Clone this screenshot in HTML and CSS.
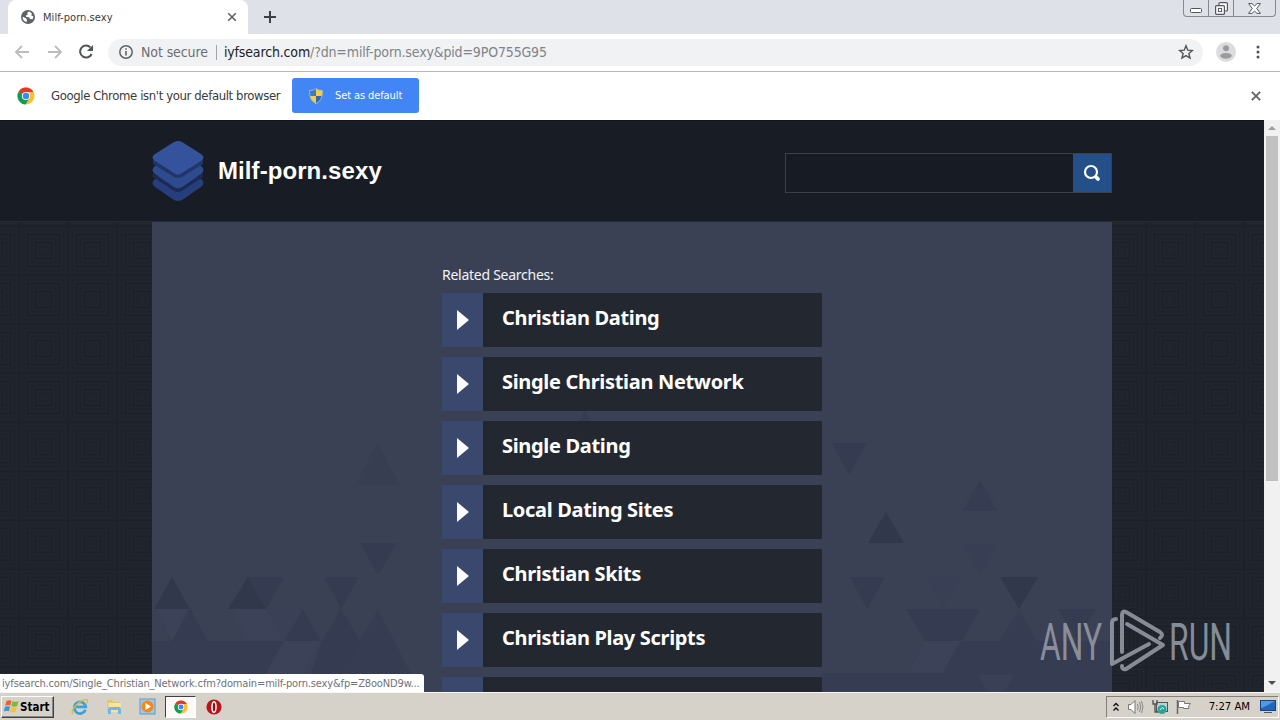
FILE: index.html
```
<!DOCTYPE html>
<html lang="en">
<head>
  <meta charset="UTF-8" />
  <title>Milf-porn.sexy</title>
  <meta name="viewport" content="width=device-width, initial-scale=1" />
  <link rel="stylesheet" href="styles.css">
</head>
<body>
  <!-- shared icons -->
  <svg width="0" height="0" class="defs">
    <symbol id="chrome" viewBox="0 0 18 18">
      <circle cx="9" cy="9" r="8.5" fill="#fbc02d"/>
      <path d="M9 9 1.6 4.7A8.5 8.5 0 0 1 16.4 5H9Z" fill="#db3a2c"/>
      <path d="M1.6 4.7A8.5 8.5 0 0 0 8.6 17.5L12.4 11 9 9Z" fill="#109d58"/>
      <circle cx="9" cy="9" r="4.1" fill="#fff"/>
      <circle cx="9" cy="9" r="3.2" fill="#4285f4"/>
    </symbol>
  </svg>

  <div class="tab-strip">
    <div class="tab">
      <svg class="globe" width="14" height="14" viewBox="0 0 14 14">
        <circle cx="7" cy="7" r="7" fill="#5f6368"/>
        <path d="M8 1.6 6.2 2.8 6.8 4.4 5 5.4 5.2 7 8 7.2 9 9 11.6 9.2 12.4 6.6 10.4 5.6 10.8 3.2ZM1.6 6.8 4.6 8 6 9.8 5.4 12.2A5.6 5.6 0 0 1 1.6 6.8Z" fill="#fff"/>
      </svg>
      <span class="tab-title">Milf-porn.sexy</span>
      <svg class="tab-close" width="10" height="10" viewBox="0 0 10 10"><path d="M1.2 1.2 8.8 8.8M8.8 1.2 1.2 8.8" stroke="#5f6368" stroke-width="1.6"/></svg>
    </div>
    <svg class="new-tab" width="12" height="12" viewBox="0 0 12 12"><path d="M6 0V12M0 6H12" stroke="#3c4043" stroke-width="2"/></svg>
    <div class="window-buttons">
      <span class="min"><svg width="12" height="5" viewBox="0 0 12 5"><rect x=".5" y=".5" width="11" height="4" rx="1" fill="#fff" stroke="#53565e"/></svg></span>
      <span class="restore"><svg width="13" height="13" viewBox="0 0 13 13"><rect x="4" y=".6" width="8.4" height="8.4" rx="1" fill="#fff" stroke="#53565e" stroke-width="1.2"/><rect x=".6" y="3.6" width="8.8" height="8.8" rx="1" fill="#fff" stroke="#53565e" stroke-width="1.2"/><rect x="3.4" y="6.4" width="3.2" height="3.2" fill="#fff" stroke="#53565e"/></svg></span>
      <span class="close"><svg width="13" height="11" viewBox="0 0 13 11"><path d="M.6.6H4L6.5 3 9 .6H12.4L8.7 5.5 12.4 10.4H9L6.5 8 4 10.4H.6L4.3 5.5Z" fill="#fff" stroke="#53565e"/></svg></span>
    </div>
  </div>

  <div class="toolbar">
    <svg width="100" height="20" viewBox="0 0 100 20" class="nav">
      <path d="M21 10H8M14 4 8 10 14 16" fill="none" stroke="#babcbe" stroke-width="1.8"/>
      <path d="M40 10H53M47 4 53 10 47 16" fill="none" stroke="#babcbe" stroke-width="1.8"/>
      <path d="M82.400 5.400A6 6 0 1 0 83.600 12" fill="none" stroke="#505357" stroke-width="2"/>
      <path d="M85 3V9H79Z" fill="#505357"/>
    </svg>
    <div class="omnibox">
      <svg width="14" height="14" viewBox="0 0 14 14"><circle cx="7" cy="7" r="6.2" fill="none" stroke="#5f6368" stroke-width="1.5"/><path d="M7 6V10.5M7 3.3V4.8" stroke="#5f6368" stroke-width="1.6"/></svg>
      <span class="secure">Not secure</span>
      <span class="divider"></span>
      <span class="url"><b>iyfsearch.com</b>/?dn=milf-porn.sexy&amp;pid=9PO755G95</span>
      <svg class="star" width="16" height="16" viewBox="0 0 16 16"><path d="M8 1.8 9.8 6.2 14.4 6.5 10.9 9.5 12 14 8 11.6 4 14 5.1 9.5 1.6 6.5 6.2 6.2Z" fill="none" stroke="#505357" stroke-width="1.4"/></svg>
    </div>
    <svg class="avatar" width="20" height="20" viewBox="0 0 20 20"><circle cx="10" cy="10" r="10" fill="#dcdcde"/><circle cx="10" cy="6.3" r="3" fill="#9b9b9d"/><ellipse cx="10" cy="13.8" rx="5.8" ry="2.9" fill="#9b9b9d"/></svg>
    <svg class="dots" width="4" height="14" viewBox="0 0 4 14"><g fill="#505357"><circle cx="2" cy="2" r="1.5"/><circle cx="2" cy="7" r="1.5"/><circle cx="2" cy="12" r="1.5"/></g></svg>
  </div>

  <div class="infobar">
    <svg width="18" height="18"><use href="#chrome"/></svg>
    <span class="info-text">Google Chrome isn't your default browser</span>
    <button class="default-btn">
      <svg width="14" height="16" viewBox="0 0 14 16">
        <path d="M7 .5C5 2 3 2.4.6 2.4.4 8.5 2 13 7 15.6Z" fill="#3c78d0"/>
        <path d="M7 .5C9 2 11 2.4 13.4 2.4 13.6 8.5 12 13 7 15.6Z" fill="#f6cf3d"/>
        <path d="M7 8H.9C1.5 11.5 3.4 14 7 15.6Z" fill="#f6cf3d"/>
        <path d="M7 8H13.1C12.5 11.5 10.6 14 7 15.6Z" fill="#2d68bd"/>
        <path d="M7 .5C5 2 3 2.4.6 2.4.4 8.5 2 13 7 15.6 12 13 13.6 8.5 13.4 2.4 11 2.4 9 2 7 .5Z" fill="none" stroke="#a9b8b8"/>
      </svg>
      <span>Set as default</span>
    </button>
    <svg class="info-close" width="10" height="10" viewBox="0 0 10 10"><path d="M.8.8 9.2 9.2M9.2.8.8 9.2" stroke="#5f6368" stroke-width="1.8"/></svg>
  </div>

  <div class="viewport">
    <div class="page">
      <header class="site-header">
        <div class="wrap header-row">
          <svg class="logo" width="52" height="62" viewBox="0 0 52 62">
            <path d="M3 39 22 28H30L49 39Q54 43 49 47L30 60Q26 62 22 60L3 47Q-2 43 3 39Z" fill="#263f7c"/>
            <path d="M1 33 26 49 51 33V37L30 51Q26 53 22 51L1 37Z" fill="#1c2b55"/>
            <path d="M3 26 22 15H30L49 26Q54 30 49 34L30 47Q26 49 22 47L3 34Q-2 30 3 26Z" fill="#2e4b90"/>
            <path d="M1 19 26 35 51 19V24L30 37Q26 39 22 37L1 24Z" fill="#223568"/>
            <path d="M3 14 22 2Q26 0 30 2L49 14Q54 17.500 49 21L30 33Q26 36 22 33L3 21Q-2 17.500 3 14Z" fill="#35529c"/>
          </svg>
          <h1>Milf-porn.sexy</h1>
          <form class="search">
            <input type="text" aria-label="Search">
            <button type="button" aria-label="Search">
              <svg width="18" height="18" viewBox="0 0 18 18"><circle cx="8" cy="8" r="6" fill="none" stroke="#fff" stroke-width="2.2"/><path d="M13.500 13.500 15 15" stroke="#fff" stroke-width="3.8" stroke-linecap="round"/></svg>
            </button>
          </form>
        </div>
      </header>

      <main class="wrap panel">
        <svg class="triangles" width="960" height="470" viewBox="152 222 960 470">
          <g fill="#32384c">
            <path d="M172 577 190 609H154Z"/>
            <path d="M248 577 266 609H228Z"/>
            <path d="M868 543H904L886 512Z"/>
            <path d="M1000 577H1038L1019 609Z"/>
          </g>
          <g fill="#353b50">
            <path d="M248 577H284L266 609Z"/>
            <path d="M324 577H359L341 609Z"/>
            <path d="M360 543H397L378 575Z"/>
            <path d="M190 609 208 641H172Z"/>
            <path d="M303 609 321 641H284Z"/>
            <path d="M341 609 360 641 378 673V692H305L322 641Z"/>
            <path d="M832 443H867L849 475Z"/>
            <path d="M850 577H885L867 609Z"/>
            <path d="M585 411 603 443H567Z"/>
            <path d="M906 609H980L962 641H925Z"/>
            <path d="M1058 609H1096L1077 641Z"/>
          </g>
          <g fill="#363c51">
            <path d="M152 641 172 641 208 641H284L267 673 305 692H152Z"/>
            <path d="M266 609H303L284 641H232Z" fill="#3a4055"/>
            <path d="M378 609 420 692H340L360 641Z"/>
            <path d="M377 443 400 485H356Z" fill="#383e51"/>
            <path d="M980 480 998 511H962Z"/>
            <path d="M962 543H998L980 573Z" fill="#383e53"/>
            <path d="M925 577H960L943 609Z" fill="#393f54"/>
            <path d="M822 673H908L925 641H1000L1019 609 1037 641H1112V692H822Z"/>
          </g>
          <g fill="#3c4257">
            <path d="M157 609H188L172 641Z"/>
            <path d="M232 609H266L284 641H248Z"/>
            <path d="M284 641H321L303 673 292 692H256Z"/>
            <path d="M925 641H960L943 673H908Z"/>
            <path d="M978 675H1014L1004 692H988Z" fill="#3a4055"/>
          </g>
        </svg>
        <div class="related">
          <p>Related Searches:</p>
          <ul>
            <li><i></i><a>Christian Dating</a></li>
            <li><i></i><a>Single Christian Network</a></li>
            <li><i></i><a>Single Dating</a></li>
            <li><i></i><a>Local Dating Sites</a></li>
            <li><i></i><a>Christian Skits</a></li>
            <li><i></i><a>Christian Play Scripts</a></li>
            <li><i></i><a></a></li>
          </ul>
        </div>
      </main>
    </div>

    <div class="scrollbar">
      <span class="arrow up"></span>
      <span class="thumb"></span>
      <span class="arrow down"></span>
    </div>

    <svg class="watermark" width="216" height="84" viewBox="1037 600 216 84">
      <g class="watermark-text">
        <text x="1040" y="660" textLength="62" lengthAdjust="spacingAndGlyphs">ANY</text>
        <text x="1169" y="660" textLength="63" lengthAdjust="spacingAndGlyphs">RUN</text>
      </g>
      <g class="watermark-mark">
        <path d="M1116 619Q1112 619 1112 623V664L1149 644"/>
        <path d="M1122 652V615Q1122 610 1126 612L1160 632Q1164 635 1160 638"/>
        <path d="M1127 624 1163 645 1126 669Q1122 670 1122 666"/>
      </g>
    </svg>
    <div class="status">iyfsearch.com/Single_Christian_Network.cfm?domain=milf-porn.sexy&amp;fp=Z8ooND9w...</div>
  </div>

  <div class="taskbar">
    <div class="start">
      <svg width="16" height="15" viewBox="0 0 16 15"><path d="M2.5 2Q5 .5 7.5 1.8L6.3 6.500Q4 5.500 1.200 6.700Z" fill="#e8622a"/><path d="M8.500 2.200Q11 3.600 14.500 2L13.200 7Q10.500 8.300 7.300 7Z" fill="#7fb93c"/><path d="M1 7.800Q3.700 6.600 6 7.600L4.800 12.300Q2.500 11.200-.2 12.500Z" fill="#3f8fdb"/><path d="M7 8Q10 9.300 12.900 8L11.600 13Q8.500 14.300 5.800 12.800Z" fill="#f5c231"/></svg>
      <b>Start</b>
    </div>
    <svg class="ql" width="18" height="18" viewBox="0 0 18 18"><path d="M14.500 11.800A5.800 5.800 0 1 1 14.800 8.900H5" fill="none" stroke="#39a3e0" stroke-width="2.700"/><path d="M2 16C-1 13 5 5 12 2.200 16 .6 17.500 2 16 5" fill="none" stroke="#e0b840" stroke-width="1.300"/></svg>
    <svg class="ql" width="18" height="18" viewBox="0 0 18 18"><path d="M2 2H7L8.500 4H15V14H2Z" fill="#e9c860"/><path d="M3.500 5H16V14H3.500Z" fill="#f8e49a"/><path d="M3 16V11Q3 9 5 9H14Q16 9 16 11V16H13V12H6V16Z" fill="#6fb9e3"/></svg>
    <svg class="ql" width="18" height="18" viewBox="0 0 18 18"><rect x="1" y="1" width="15" height="15" fill="#9fc8e8" stroke="#5b9bd0"/><circle cx="8.500" cy="8.500" r="6" fill="#f18a1b"/><path d="M6.500 5 12 8.500 6.500 12Z" fill="#fff"/></svg>
    <div class="task-active"><svg width="14" height="14"><use href="#chrome"/></svg></div>
    <svg class="opera" width="16" height="16" viewBox="0 0 16 16"><circle cx="8" cy="8" r="7.600" fill="#b3161b"/><ellipse cx="8" cy="8" rx="2" ry="5.300" fill="#8f1014" stroke="#fff" stroke-width="1.500"/></svg>
    <div class="tray">
      <svg width="8" height="10" viewBox="0 0 8 10"><path d="M1.500 4 4 1.500 6.500 4M1.500 8.500 4 6 6.500 8.500" fill="none" stroke="#111" stroke-width="1.400"/></svg>
      <svg width="18" height="16" viewBox="0 0 18 16"><path d="M1.500 5.500H4L8 1.500V14.500L4 10.500H1.500Z" fill="#fff" stroke="#777"/><path d="M10.500 5Q12 8 10.500 11M12.500 3Q15 8 12.500 13M14.500 2Q17.500 8 14.500 14" fill="none" stroke="#888"/></svg>
      <svg width="16" height="16" viewBox="0 0 16 16"><rect x="4.500" y="3.500" width="11" height="9" fill="#b7d5d8" stroke="#555"/><path d="M1 1V5H5V1M3 5V13H7" fill="none" stroke="#555" stroke-width="1.400"/><circle cx="10" cy="10.500" r="4.500" fill="#2ba595"/><path d="M8 11 10 8.500 12 10" fill="none" stroke="#d5f4ee"/></svg>
      <svg width="18" height="16" viewBox="0 0 18 16"><path d="M2.500 1V15" stroke="#666" stroke-width="1.500"/><path d="M3.500 2.500H9.500V4.500H15.500L13.500 7 14 9.500H8.500V8.500H3.500Z" fill="#fff" stroke="#777"/></svg>
      <span class="clock">7:27 AM</span>
      <svg class="desktop" width="16" height="13" viewBox="0 0 16 13"><rect x=".5" y=".5" width="15" height="10" fill="#2365bd" stroke="#184580"/><path d="M1 1H15L4 7 1 8Z" fill="#5199e4"/><path d="M4 12.500H12" stroke="#555"/></svg>
    </div>
  </div>
</body>
</html>
```
FILE: styles.css
```
* {
  box-sizing: border-box;
}

body {
  margin: 0;
  width: 1280px;
  height: 720px;
  overflow: hidden;
  display: flex;
  flex-direction: column;
  font-family: "DejaVu Sans Condensed", "DejaVu Sans", sans-serif;
  font-size: 13px;
  color: #3a3a3a;
  background: #fff;
}

svg {
  display: block;
  flex: none;
}

.defs {
  position: absolute;
}

/* browser chrome */
.tab-strip {
  height: 34px;
  background: #dee1e8;
  display: flex;
  align-items: flex-start;
  padding-left: 8px;
}

.tab {
  width: 240px;
  height: 34px;
  background: #fff;
  border-radius: 8px 8px 0 0;
  display: flex;
  align-items: center;
  padding: 0 11px 0 13px;
}

.tab-title {
  margin-left: 8px;
  font-size: 11px;
  letter-spacing: 0.05px;
}

.tab-close {
  margin-left: auto;
}

.new-tab {
  margin: 11px 0 0 16px;
}

.window-buttons {
  display: flex;
  margin: 0 4px 0 auto;
  height: 17px;
  border: 1px solid #868991;
  border-top: none;
  border-radius: 0 0 4px 4px;
}

.window-buttons span {
  display: flex;
  justify-content: center;
  align-items: center;
  width: 24px;
}

.window-buttons .min {
  padding-top: 5px;
}

.window-buttons .restore {
  width: 26px;
  border-left: 1px solid #868991;
  border-right: 1px solid #868991;
}

.window-buttons .close {
  width: 41px;
}

.toolbar {
  height: 38px;
  border-bottom: 1px solid #b5b6b8;
  display: flex;
  align-items: center;
  padding: 0 20px 1px 8px;
}

.omnibox {
  width: 1095px;
  height: 27px;
  border-radius: 14px;
  background: #f0f2f4;
  display: flex;
  align-items: center;
  padding: 0 9px 0 11px;
  font-size: 14px;
  color: #6b6e73;
}

.secure {
  margin-left: 8px;
  letter-spacing: -0.1px;
}

.divider {
  width: 1px;
  height: 15px;
  margin: 0 7px 0 8px;
  background: #a2a4a7;
}

.url {
  color: #808388;
  letter-spacing: -0.15px;
}

.url b {
  font-weight: normal;
  color: #202124;
}

.star {
  margin-left: auto;
}

.avatar {
  margin-left: 13px;
}

.dots {
  margin-left: auto;
}

.infobar {
  height: 48px;
  display: flex;
  align-items: center;
  padding: 0 19px 1px 17px;
}

.info-text {
  width: 228px;
  margin: 0 13px 0 16px;
  letter-spacing: -0.38px;
  white-space: nowrap;
}

.default-btn {
  width: 127px;
  height: 35px;
  border: none;
  border-radius: 3px;
  background: #4285f4;
  color: #fff;
  display: flex;
  align-items: center;
  gap: 12px;
  padding: 0 0 0 17px;
  font: 11px "DejaVu Sans Condensed", "DejaVu Sans", sans-serif;
  letter-spacing: -0.1px;
  white-space: nowrap;
}

.info-close {
  margin-left: auto;
}

/* parked domain page */
.viewport {
  position: relative;
  height: 572px;
  display: flex;
}

.page {
  width: 1264px;
  height: 572px;
  overflow: hidden;
  background-color: #1f242c;
  background-image: url("data:image/svg+xml,%3Csvg xmlns='http://www.w3.org/2000/svg' width='49' height='49'%3E%3Cg fill='none' stroke='%2322272f'%3E%3Cpath d='M2.500 2.500h44v44h-44zM6.500 6.500h36v36h-36zM10.500 10.500h28v28h-28zM14.500 14.500h20v20h-20zM18.500 18.500h12v12h-12zM22.500 22.500h4v4h-4z'/%3E%3C/g%3E%3Cpath d='M.5 0v49M0 .5h49M8.500 8.500h32v32h-32zM16.500 16.500h16v16h-16z' fill='none' stroke='%231c2128'/%3E%3C/svg%3E");
  background-position: 19px 8px;
}

.site-header {
  height: 102px;
  background: #181c25;
  border-top: 1px solid #11141b;
  border-bottom: 1px solid #252a33;
}

.wrap {
  width: 960px;
  margin: 0 auto;
}

.header-row {
  display: flex;
  align-items: center;
  height: 100px;
}

h1 {
  margin: 0 0 0 14px;
  font: bold 24px "Liberation Sans", Arial, sans-serif;
  letter-spacing: 0.08px;
  color: #fff;
}

.search {
  display: flex;
  width: 327px;
  height: 40px;
  margin: 4px 0 0 auto;
  border: 1px solid #3b404a;
}

.search input {
  flex: 1;
  min-width: 0;
  border: none;
  background: #171b23;
}

.search button {
  width: 38px;
  padding: 0;
  border: none;
  background: #235088;
  display: flex;
  justify-content: center;
  align-items: center;
}

.panel {
  position: relative;
  height: 470px;
  background: #3b4155;
  overflow: hidden;
}

.triangles {
  position: absolute;
  top: 0;
  left: 0;
}

.related {
  position: relative;
  width: 380px;
  margin: 0 auto;
  padding-top: 43px;
}

.related p {
  margin: 0 0 8px;
  height: 20px;
  font: 14px/20px "Noto Sans", sans-serif;
  letter-spacing: -0.26px;
  color: #f3f4f7;
}

.related ul {
  list-style: none;
  margin: 0;
  padding: 0;
}

.related li {
  display: flex;
  height: 54px;
  margin-bottom: 10px;
  background: #232830;
}

.related i {
  width: 41px;
  background: #3b486d;
  display: flex;
  align-items: center;
  padding-left: 15px;
}

.related i::after {
  content: "";
  border-left: 12px solid #fff;
  border-top: 10px solid transparent;
  border-bottom: 10px solid transparent;
}

.related a {
  padding-left: 19px;
  font: bold 20px/50px "Noto Sans", sans-serif;
  letter-spacing: -0.32px;
  color: #fff;
}

.scrollbar {
  width: 16px;
  background: #f1f1f1;
  display: flex;
  flex-direction: column;
  align-items: center;
}

.thumb {
  width: 12px;
  height: 345px;
  background: #c1c1c1;
}

.arrow {
  border: 4px solid transparent;
}

.arrow.up {
  margin: 2px 0 6px;
  border-bottom-color: #a0a0a0;
}

.arrow.down {
  margin: auto 0 3px;
  border-top-color: #505050;
}

.watermark {
  position: absolute;
  left: 1037px;
  top: 480px;
  opacity: 0.9;
}

.watermark-text {
  font: 400 52px Roboto, sans-serif;
  fill: #9297a2;
}

.watermark-mark {
  fill: none;
  stroke: #9297a2;
  stroke-width: 4px;
  stroke-linejoin: round;
  stroke-linecap: round;
}

.status {
  position: absolute;
  left: 0;
  bottom: 0;
  width: 424px;
  height: 18px;
  padding-left: 2px;
  border-radius: 0 3px 0 0;
  background: #fff;
  color: #707276;
  font-size: 11px;
  line-height: 19px;
  letter-spacing: -0.15px;
  white-space: nowrap;
}

/* windows taskbar */
.taskbar {
  height: 28px;
  background: #d6d2c9;
  border-top: 1px solid #f7f6f3;
  display: flex;
  align-items: center;
  padding: 0 1px 0;
  color: #000;
}

.start {
  width: 53px;
  height: 22px;
  margin-right: 17px;
  display: flex;
  align-items: center;
  padding-left: 2px;
  border: 1px solid;
  border-color: #fff #404040 #404040 #fff;
  box-shadow: inset -1px -1px #888;
  font-size: 11.5px;
}

.ql {
  margin-right: 16px;
}

.task-active {
  width: 31px;
  height: 22px;
  margin: 0 10px 0 -8px;
  background: #fbfaf8;
  border: 1px solid;
  border-color: #404040 #fff #fff #404040;
  display: flex;
  justify-content: center;
  align-items: center;
}

.tray {
  margin-left: auto;
  width: 173px;
  height: 22px;
  display: flex;
  align-items: center;
  gap: 7px;
  padding: 0 2px 0 5px;
  border: 1px solid;
  border-color: #848078 #fff #fff #848078;
}

.clock {
  margin: 0 3px 0 auto;
  font-size: 11.2px;
  white-space: nowrap;
}
```
